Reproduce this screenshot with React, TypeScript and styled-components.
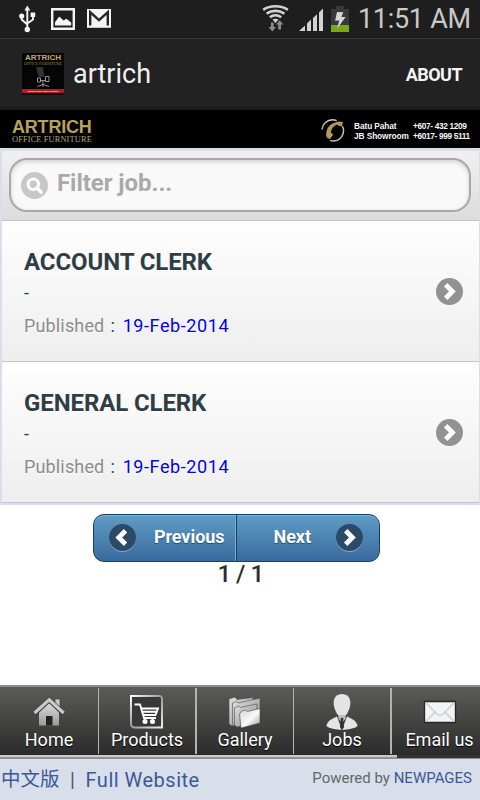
import React from "react";
import styled, { createGlobalStyle } from "styled-components";

const GlobalStyle = createGlobalStyle`
  *, *::before, *::after { box-sizing: border-box; }
  html, body { margin: 0; padding: 0; background: #fff; }
  body { font-family: Roboto, "Noto Sans CJK SC", sans-serif; overflow: hidden; }
`;

const Screen = styled.div`
  width: 480px;
  height: 800px;
  display: flex;
  flex-direction: column;
  overflow: hidden;
  background: #fff;
`;

const StatusBar = styled.header`
  height: 39px;
  flex: none;
  display: flex;
  justify-content: space-between;
  background: #1e1e1e;
  border-bottom: 1px solid #353535;
`;

const StatusIcons = styled.div`
  display: flex;
  svg { display: block; }
`;

const NotificationIcons = styled(StatusIcons)`
  padding-left: 4px;
  gap: 9px;
`;

const Clock = styled.span`
  width: 122px;
  font-size: 27px;
  line-height: 39px;
  letter-spacing: -0.3px;
  color: #c9c9c9;
  white-space: nowrap;
`;

const ActionBar = styled.div`
  height: 71px;
  flex: none;
  display: flex;
  align-items: center;
  padding: 0 18px 0 22px;
  background: #222;
  border-bottom: 3px solid #1b1b1b;
`;

const AppLogo = styled.div`
  width: 42px;
  height: 42px;
  margin-top: 1px;
  display: flex;
  flex-direction: column;
  align-items: center;
  background: #050505;
  overflow: hidden;
`;

const LogoName = styled.span`
  font: bold 8px/8px "Liberation Sans", sans-serif;
  color: #c4ab60;
  margin-top: 1px;
  white-space: nowrap;
`;

const LogoSub = styled.span`
  font: 4.1px/4px "Liberation Serif", serif;
  color: #9c8a55;
  white-space: nowrap;
`;

const LogoSlogan = styled.span`
  width: 42px;
  height: 4px;
  background: #b01c22;
  color: #eee;
  font: italic bold 2.1px/4px "Liberation Sans", sans-serif;
  text-align: center;
  white-space: nowrap;
`;

const AppTitle = styled.h1`
  margin: 1px auto 0 9px;
  font-size: 27px;
  line-height: 34px;
  font-weight: 400;
  color: #f0f0f0;
`;

const AboutButton = styled.button`
  border: 0;
  padding: 4px 0 0;
  background: none;
  font: 700 18px/24px Roboto, sans-serif;
  letter-spacing: -0.55px;
  color: #f4f4f4;
`;

const Banner = styled.div`
  height: 38px;
  flex: none;
  display: flex;
  align-items: flex-start;
  padding-left: 12px;
  background: #000;
`;

const Brand = styled.div`
  width: 309px;
  display: flex;
  flex-direction: column;
  padding-top: 9px;
  white-space: nowrap;
`;

const BrandName = styled.span`
  font: bold 18px/17px "Liberation Sans", sans-serif;
  letter-spacing: -0.2px;
  color: #b8a25a;
`;

const BrandSub = styled.span`
  margin-top: -1px;
  font: 8.4px/9px "Liberation Serif", serif;
  letter-spacing: 0.12px;
  color: #b0a47c;
`;

const Contacts = styled.dl`
  margin: 11px 0 0 8px;
  display: grid;
  grid-template-columns: 59px auto;
  font: bold 8.3px/10px "Liberation Sans", sans-serif;
  color: #f6f6f6;
  white-space: nowrap;
  dt { letter-spacing: -0.08px; }
  dd { margin: 0; letter-spacing: -0.35px; }
`;

const JobList = styled.main`
  flex: none;
  padding: 3px 1px 2px 2px;
  background: #d8deec;
`;

const FilterBar = styled.div`
  height: 70px;
  padding: 7px 8px 0 7px;
  background: linear-gradient(#f0f0f0, #dcdcdc);
  border-bottom: 1px solid #c4c4c4;
`;

const SearchField = styled.label`
  height: 54px;
  display: flex;
  align-items: center;
  gap: 9px;
  padding-left: 10px;
  border: 2px solid #a8a8a8;
  border-radius: 18px;
  background: #f9f9f9;
  box-shadow: inset 0 2px 5px rgba(0, 0, 0, 0.16);
  svg { display: block; }
`;

const Placeholder = styled.span`
  font-size: 24px;
  line-height: 30px;
  padding-bottom: 5px;
  font-weight: 700;
  letter-spacing: -0.05px;
  color: #aaa;
`;

const JobRow = styled.article`
  height: 141px;
  display: flex;
  justify-content: space-between;
  padding: 26px 16px 0 22px;
  background: linear-gradient(#fefefe, #eee);
  border-bottom: 1px solid #c6c6c6;
  color: #2f3e46;
  text-shadow: 0 1px 0 #fff;
  svg { margin-top: 31px; }
`;

const JobTitle = styled.h2`
  margin: 0;
  font-size: 24px;
  line-height: 30px;
  font-weight: 700;
  letter-spacing: -0.1px;
`;

const JobNote = styled.p`
  margin: 1px 0 3px;
  font-size: 18px;
  line-height: 30px;
`;

const JobMeta = styled.p`
  margin: 0;
  font-size: 18px;
  line-height: 30px;
  white-space: pre;
`;

const MetaLabel = styled.span`
  letter-spacing: 0.15px;
  color: #8c8c8c;
`;

const MetaColon = styled.span`
  letter-spacing: 1.65px;
`;

const JobDate = styled.time`
  letter-spacing: 0.58px;
  color: #0000ee;
`;

const Pager = styled.nav`
  display: flex;
  flex-direction: column;
  align-items: center;
  padding: 9px 8px 0 0;
`;

const PagerButtons = styled.div`
  width: 287px;
  height: 48px;
  display: flex;
  border: 1.5px solid #0d4262;
  border-radius: 11px;
  background: linear-gradient(#5f9cc5, #396b9e);
  box-shadow: inset 0 1px 0 #83b3d2;
  overflow: hidden;
`;

const PagerButton = styled.button<{ $side: "left" | "right" }>`
  width: ${(p) => (p.$side === "left" ? 142 : 143)}px;
  flex: none;
  display: flex;
  align-items: center;
  justify-content: space-between;
  padding: ${(p) => (p.$side === "left" ? "0 10px 0 15.5px" : "0 16px 0 37px")};
  border: 0;
  border-right: ${(p) => (p.$side === "left" ? "1px solid #7fb2d4" : "0")};
  border-left: ${(p) => (p.$side === "right" ? "1px solid #0d4262" : "0")};
  background: none;
  color: #fff;
  svg { flex: none; }
`;

const PagerLabel = styled.span`
  padding-bottom: 2px;
  font: 700 18px/24px Roboto, sans-serif;
  letter-spacing: -0.05px;
  text-shadow: 0 1px 1px #194b7e;
`;

const PageCount = styled.p`
  margin: -3px 0 0;
  padding-left: 9px;
  font-size: 24px;
  line-height: 30px;
  font-weight: 500;
  letter-spacing: -0.5px;
  color: #2d2d2d;
`;

const TabBar = styled.nav`
  height: 70px;
  flex: none;
  margin-top: auto;
  display: flex;
  border-top: 2px solid #8c8e8c;
  background: linear-gradient(#5b5b59, #2b2b2b);
`;

const Tab = styled.a<{ $width: number; $divider: number }>`
  width: ${(p) => p.$width}px;
  flex: none;
  height: 66px;
  margin-top: 1px;
  padding-top: 5px;
  display: flex;
  flex-direction: column;
  align-items: center;
  border-right: ${(p) => p.$divider}px solid #b3b3b3;
  color: #fff;
  svg { flex: none; display: block; }
`;

const TabLabel = styled.span`
  margin-top: -5px;
  font-size: 18px;
  line-height: 24px;
  white-space: nowrap;
  text-shadow: 0 1px 1px #000;
`;

const ScrollTrack = styled.div`
  height: 4px;
  flex: none;
  background: #333;
  border-bottom: 1px solid #8c8e90;
`;

const ScrollThumb = styled.div`
  width: 397px;
  height: 3px;
  background: #c9c9c9;
  border-bottom: 1px solid #929292;
`;

const Footer = styled.footer`
  height: 41px;
  flex: none;
  display: flex;
  justify-content: space-between;
  padding: 0 8px 0 1px;
  background: #d8deea;
  white-space: nowrap;
`;

const SiteLinks = styled.div`
  display: flex;
  font-size: 20px;
  line-height: 42px;
  color: #3b5998;
`;

const LanguageLink = styled.a`
  font-size: 19.5px;
`;

const SiteLink = styled.a`
  letter-spacing: 0.5px;
`;

const Separator = styled.span`
  width: 26px;
  text-align: center;
  color: #555;
`;

const Credit = styled.div`
  font-size: 15px;
  line-height: 39px;
  color: #666;
  a { color: #3b5998; }
`;

const UsbIcon = () => (
  <svg width="32" height="38" viewBox="4 0 32 38" fill="none" stroke="#f4f4f4" strokeWidth="1.9">
    <path d="M27.3 9v20M21.7 16v3.5l5.6 5M33 15v4.5l-5.7 4" />
    <path d="m27.3 5.5 3 5h-6zM30.6 12.5h4.6v4.6h-4.6z" fill="#f4f4f4" stroke="none" />
    <circle cx="21.7" cy="16" r="2.6" fill="#f4f4f4" stroke="none" />
    <circle cx="27.3" cy="29.5" r="2.7" fill="#f4f4f4" stroke="none" />
  </svg>
);

const PictureIcon = () => (
  <svg width="27" height="38" viewBox="45 0 27 38" overflow="visible">
    <path d="M52.2 9.2h21.6v19.6H52.2z" fill="none" stroke="#f4f4f4" strokeWidth="2.4" />
    <path d="M55 25.5v-3.3l4.2-5.6 4.4 4 2.8-1.8 4.8 3.6v3.1z" fill="#f4f4f4" />
  </svg>
);

const MailIcon = () => (
  <svg width="36" height="38" viewBox="81 0 36 38">
    <path d="M87 9h24v18.8H87z" fill="#f4f4f4" />
    <path d="M90.2 25.5V12.2l8.8 8 8.8-8v13.3" fill="none" stroke="#252525" strokeWidth="2.4" />
  </svg>
);

const SignalIcons = () => (
  <svg width="98" height="38" viewBox="260 0 98 38">
    <g fill="none" stroke="#d2d2d2" strokeWidth="2.6">
      <path d="M263.2 9.8c7-4.700 17.500-4.700 24.600 0M266.600 13.600c5.200-3.600 12.600-3.600 17.800 0M269.800 17.200c3.400-2.500 8-2.500 11.400 0" />
    </g>
    <path d="m275.500 23-3-3.400c1.700-1.200 4.300-1.200 6 0z" fill="#d2d2d2" />
    <path d="m272.300 31.500-3.700-4.400h2.300V22.500h2.800v4.600h2.300zM279.700 20.300l3.600 4.300H281V29.500h-2.800v-4.900H276z" fill="#8c8c8c" />
    <path d="M299 31l6-5.600V31zM307 31v-7.600l4-3.800V31zM313 31V18l4-3.800V31zM319 31V12.500l4-4V31z" fill="#d2d2d2" />
    <path d="M331 9h5V6h8v3h5v16h-18z" fill="#393939" />
    <path d="M331 25h18v7h-18z" fill="#7aa619" />
    <path d="m337 12 6.300.2-2 4.700h4.300L337 28.800l2.300-8.200-4.200.2z" fill="#d8d8d8" />
  </svg>
);

const ChairDrawing = () => (
  <svg width="42" height="23" viewBox="0 0 42 23" fill="none" stroke="#b5b5b5" strokeWidth="0.8">
    <path d="M14.500 1.500h6l1.500 9h-5z" fill="#333" stroke="#333" />
    <path d="M15.500 12h3v4h-3zM23.500 10.500h3.500v5h-3.500zM18 14.500h6M21 15v4M15.500 20.500l5.500-2 6 2M21 18.500v2.500" />
  </svg>
);

const PhoneDrawing = () => (
  <svg width="25" height="38" viewBox="321 110 25 38">
    <path d="M322 129.500c.5-5.500 5-9.700 10.500-9.700 1.500 0 3 .3 4.200.8M342.300 126c3.600 7-1.600 15.200-8.800 15-1.300 0-2.500-.3-3.500-.7" fill="none" stroke="#c7c7c7" strokeWidth="1.4" />
    <path d="M335.500 122.500q3-1.800 7.500-.3l-1.200 4q-3 .4-4.600-1.600-5.600 2-6.400 8.200 2 .4 2.200 2.200l-3 4q-3.300-.2-3.800-3.400c-.4-6.800 3.200-11.600 9.300-13.100z" fill="#b49b52" />
  </svg>
);

const SearchIcon = () => (
  <svg width="27" height="27" viewBox="0 0 27 27">
    <circle cx="13.5" cy="13.5" r="13.5" fill="#c8c8c8" />
    <circle cx="12.3" cy="12.3" r="5.2" fill="none" stroke="#fff" strokeWidth="3" />
    <path d="m16 16 4.200 4.200" stroke="#fff" strokeWidth="3.4" strokeLinecap="round" />
  </svg>
);

const ArrowDisc = ({ fill, back, ring }: { fill: string; back?: boolean; ring?: string }) => (
  <svg width="27" height="28" viewBox="0 0 27 28">
    {ring && <circle cx="13.5" cy="14.5" r="13.5" fill={ring} />}
    <circle cx="13.5" cy="13.5" r="13.5" fill={fill} />
    <path d={back ? "m16.500 6.800-6.700 6.700 6.700 6.700" : "m9.700 6.800 6.700 6.700-6.700 6.700"} fill="none" stroke="#fff" strokeWidth="4.8" />
  </svg>
);

const HomeIcon = () => (
  <svg width="36" height="40" viewBox="0 0 36 40">
    <defs>
      <linearGradient id="homeFill" x2="0" y2="1"><stop stopColor="#ddd" /><stop offset="1" stopColor="#9b9b9b" /></linearGradient>
    </defs>
    <path d="M24 6h5v10l-5-5z" fill="#c7c7c7" stroke="#333" strokeWidth=".6" />
    <path d="M8 18 18 9l10 9v14.500H8z" fill="url(#homeFill)" />
    <path d="M3.500 20.500 18.200 7l14.500 13.500" fill="none" stroke="#393939" strokeWidth="5" />
    <path d="M3.500 20 18.200 6.800 32.700 20" fill="none" stroke="#c9c9c9" strokeWidth="3.3" />
    <path d="M15 23h6.500v9.500H15z" fill="#222" />
  </svg>
);

const CartIcon = () => (
  <svg width="36" height="40" viewBox="0 0 36 40" fill="none">
    <defs>
      <linearGradient id="cartFrame" x2="1" y2="1"><stop stopColor="#fff" /><stop offset=".5" stopColor="#999" /><stop offset="1" stopColor="#eee" /></linearGradient>
    </defs>
    <path d="M2 3h28q3 0 3 3v28.500H6q-4 0-4-4z" fill="#383838" stroke="url(#cartFrame)" strokeWidth="2" />
    <path d="M5.500 11.500H11l4 13.500h12M12 15.500h17l-2.500 6.500H14.700M13 18.700h15" stroke="#fff" strokeWidth="1.9" />
    <circle cx="16" cy="28.5" r="2.5" fill="#fff" />
    <circle cx="23.5" cy="28.5" r="2.5" fill="#fff" />
  </svg>
);

const FoldersIcon = () => (
  <svg width="36" height="40" viewBox="0 0 36 40" stroke="#4a4a4a" strokeWidth=".6">
    <defs>
      <linearGradient id="folderBack" x2="1" y2="1"><stop stopColor="#e2e2e2" /><stop offset="1" stopColor="#8a8a8a" /></linearGradient>
      <linearGradient id="folderFront" x2="1" y2="1"><stop stopColor="#d2d2d2" /><stop offset=".55" stopColor="#fafafa" /><stop offset="1" stopColor="#999" /></linearGradient>
    </defs>
    <path d="m2 6 6-2 2 2.500L26 4.500v22L5 33l-3-2z" fill="url(#folderBack)" />
    <path d="m5.500 10 4-1.500 2 1.500L33 5v22L8 33l-2.500-2z" fill="url(#folderBack)" />
    <path d="m7.500 15 4-2 2 1.500L30 11v19l-20 4-2.500-2z" fill="url(#folderBack)" />
    <path d="m12.500 21 2-3 4-.8 2 1.300L33 15.500V30l-19 5z" fill="url(#folderFront)" />
  </svg>
);

const PersonIcon = () => (
  <svg width="36" height="40" viewBox="0 0 36 40" fill="#e4e4e4">
    <path d="M18 1c9 0 9.500 9 7.200 15-2 5-3 7-7.200 8-4.200-1-5.200-3-7.200-8C8.500 10 9 1 18 1z" />
    <path d="M14.500 22h7v4l-3.500 3-3.500-3z" fill="#c2c2c2" />
    <path d="M13 23.500 18 37l5-13.500c6 2.300 10.200 5.500 10.500 9.500-6 5-25 5-31 0 .3-4 4.500-7.200 10.500-9.500z" />
    <path d="m16.400 25.500 1.600-1 1.600 1-.7 2.500 1.300 6-2.200 3-2.200-3 1.300-6z" fill="#333" />
  </svg>
);

const EnvelopeIcon = () => (
  <svg width="36" height="40" viewBox="0 0 36 40">
    <path d="M2.500 8.500h31v21h-31z" fill="#f1f3f4" stroke="#262626" strokeWidth="1.3" />
    <path d="m4 28.500 9.500-10M32 28.500l-9.500-10M4 10l11 11q3 3 6 0L32 10" fill="none" stroke="#c6cdd1" strokeWidth="1.2" />
  </svg>
);

const jobs = [
  { title: "ACCOUNT CLERK", note: "-", date: "19-Feb-2014" },
  { title: "GENERAL CLERK", note: "-", date: "19-Feb-2014" },
];

const tabs = [
  { label: "Home", Icon: HomeIcon, width: 99, divider: 1 },
  { label: "Products", Icon: CartIcon, width: 98, divider: 2 },
  { label: "Gallery", Icon: FoldersIcon, width: 97, divider: 1 },
  { label: "Jobs", Icon: PersonIcon, width: 98, divider: 2 },
  { label: "Email us", Icon: EnvelopeIcon, width: 95, divider: 0 },
];

export default function App() {
  return (
    <Screen>
      <GlobalStyle />
      <StatusBar>
        <NotificationIcons>
          <UsbIcon />
          <PictureIcon />
          <MailIcon />
        </NotificationIcons>
        <StatusIcons>
          <SignalIcons />
          <Clock>11:51 AM</Clock>
        </StatusIcons>
      </StatusBar>
      <ActionBar>
        <AppLogo>
          <LogoName>ARTRICH</LogoName>
          <LogoSub>OFFICE FURNITURE</LogoSub>
          <ChairDrawing />
          <LogoSlogan>Modern Luxury Office Furniture</LogoSlogan>
        </AppLogo>
        <AppTitle>artrich</AppTitle>
        <AboutButton>ABOUT</AboutButton>
      </ActionBar>
      <Banner>
        <Brand>
          <BrandName>ARTRICH</BrandName>
          <BrandSub>OFFICE FURNITURE</BrandSub>
        </Brand>
        <PhoneDrawing />
        <Contacts>
          <dt>Batu Pahat</dt>
          <dd>+607- 432 1209</dd>
          <dt>JB Showroom</dt>
          <dd>+6017- 999 5111</dd>
        </Contacts>
      </Banner>
      <JobList>
        <FilterBar>
          <SearchField>
            <SearchIcon />
            <Placeholder>Filter job...</Placeholder>
          </SearchField>
        </FilterBar>
        {jobs.map((job) => (
          <JobRow key={job.title}>
            <div>
              <JobTitle>{job.title}</JobTitle>
              <JobNote>{job.note}</JobNote>
              <JobMeta>
                <MetaLabel>Published</MetaLabel>
                <MetaColon> : </MetaColon>
                <JobDate>{job.date}</JobDate>
              </JobMeta>
            </div>
            <ArrowDisc fill="#929292" />
          </JobRow>
        ))}
      </JobList>
      <Pager>
        <PagerButtons>
          <PagerButton $side="left">
            <ArrowDisc fill="#2a4a68" ring="#83a9c8" back />
            <PagerLabel>Previous</PagerLabel>
          </PagerButton>
          <PagerButton $side="right">
            <PagerLabel>Next</PagerLabel>
            <ArrowDisc fill="#2a4a68" ring="#83a9c8" />
          </PagerButton>
        </PagerButtons>
        <PageCount>1 / 1</PageCount>
      </Pager>
      <TabBar>
        {tabs.map(({ label, Icon, width, divider }) => (
          <Tab key={label} $width={width} $divider={divider}>
            <Icon />
            <TabLabel>{label}</TabLabel>
          </Tab>
        ))}
      </TabBar>
      <ScrollTrack>
        <ScrollThumb />
      </ScrollTrack>
      <Footer>
        <SiteLinks>
          <LanguageLink>中文版</LanguageLink>
          <Separator>|</Separator>
          <SiteLink>Full Website</SiteLink>
        </SiteLinks>
        <Credit>
          Powered by <a>NEWPAGES</a>
        </Credit>
      </Footer>
    </Screen>
  );
}
